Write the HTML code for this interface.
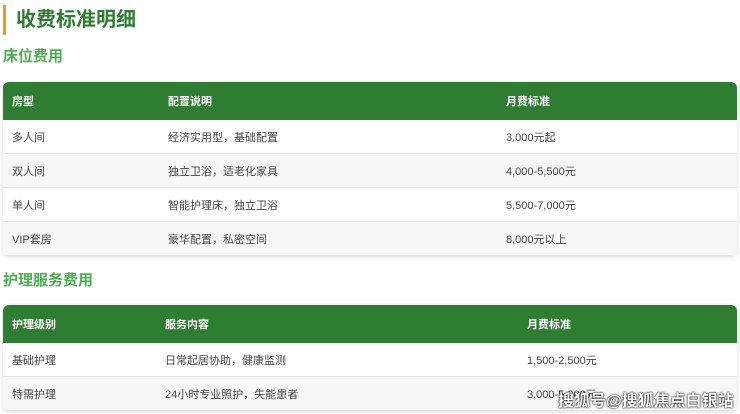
<!DOCTYPE html>
<html><head><meta charset="utf-8"><style>
body{margin:0;width:740px;height:414px;overflow:hidden;background:#fff;font-family:"Liberation Sans","Noto Sans CJK SC",sans-serif;position:relative}
.bar{position:absolute;left:3px;top:5px;width:3px;height:30px;background:#f39c12}
h1{position:absolute;left:16px;top:5px;margin:0;font-size:20px;line-height:30px;color:#2e7d32;font-weight:bold}
h2{position:absolute;left:3px;margin:0;font-size:15px;line-height:20px;color:#4caf50;font-weight:bold}
table{position:absolute;left:3px;width:734px;border-collapse:collapse;border-radius:6px;overflow:hidden;box-shadow:0 1px 4px rgba(0,0,0,.15);font-size:11px;color:#444}
th{background:#2e7d32;color:#fff;text-align:left;font-weight:bold;height:38px;padding:0 0 0 9px}
td{height:33px;padding:0 0 0 9px;border-bottom:1px solid #e4e4e4}
tr:nth-child(odd) td{background:#f7f7f7}
.wm{position:absolute;left:558px;top:387px;font-size:16px;color:#fff;font-weight:bold;text-shadow:0 0 2px #000,0 0 1px #000}
</style></head><body>
<div class="bar"></div><h1>收费标准明细</h1>
<h2 style="top:47px">床位费用</h2>
<table style="top:82px"><tr><th style="width:147px">房型</th><th style="width:329px">配置说明</th><th>月费标准</th></tr>
<tr><td>多人间</td><td>经济实用型，基础配置</td><td>3,000元起</td></tr>
<tr><td>双人间</td><td>独立卫浴，适老化家具</td><td>4,000-5,500元</td></tr>
<tr><td>单人间</td><td>智能护理床，独立卫浴</td><td>5,500-7,000元</td></tr>
<tr><td>VIP套房</td><td>豪华配置，私密空间</td><td>8,000元以上</td></tr></table>
<h2 style="top:271px">护理服务费用</h2>
<table style="top:305px"><tr><th style="width:144px">护理级别</th><th style="width:353px">服务内容</th><th>月费标准</th></tr>
<tr><td>基础护理</td><td>日常起居协助，健康监测</td><td>1,500-2,500元</td></tr>
<tr><td>特需护理</td><td>24小时专业照护，失能患者</td><td>3,000-5,000元</td></tr></table>
<div class="wm">搜狐号@搜狐焦点白银站</div>
</body></html>
